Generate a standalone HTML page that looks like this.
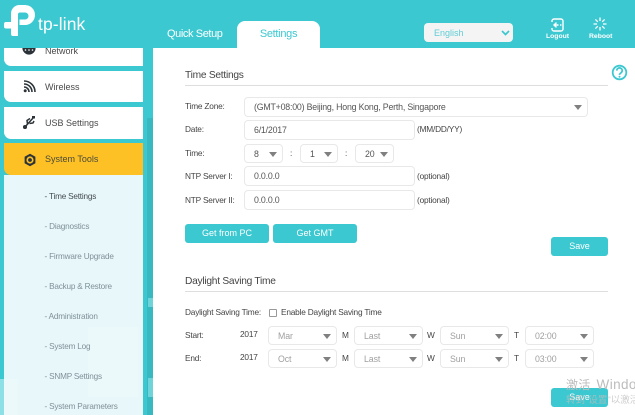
<!DOCTYPE html>
<html lang="en">
<head>
<meta charset="utf-8">
<title>Time Settings</title>
<style>
html,body{margin:0;padding:0;width:635px;height:415px;overflow:hidden;background:#fff}
body{position:relative;font-family:"Liberation Sans","Noto Sans CJK SC",sans-serif;color:#555}
#w{position:absolute;left:0;top:0;width:635px;height:415px;overflow:hidden;filter:blur(.3px)}
.a{position:absolute;white-space:nowrap}
.t{position:absolute;white-space:nowrap;line-height:14px}
.box{position:absolute;box-sizing:border-box;background:#fff;border:1px solid #e8e8e8;border-radius:4px;font-size:8.8px;letter-spacing:-.2px;line-height:18px;padding-left:9px;color:#555;white-space:nowrap}
.gr{color:#a0a0a0;font-size:8.8px;letter-spacing:-.1px}
.box i{position:absolute;right:5px;top:50%;margin-top:-2px;width:0;height:0;border-left:4px solid transparent;border-right:4px solid transparent;border-top:5px solid #808080}
.lab{font-size:8.3px;letter-spacing:-.2px;color:#444}
.btn{position:absolute;box-sizing:border-box;background:#3cc8d0;border-radius:3px;color:#fff;font-size:9px;text-align:center;line-height:19px;height:19px}
.mi{position:absolute;left:4px;width:139px;background:#fff;border-bottom-left-radius:7px}
.mt{position:absolute;left:45px;font-size:9px;color:#4a4a4a;line-height:12px;white-space:nowrap}
.sub{position:absolute;left:44.500px;font-size:8.200px;letter-spacing:-.2px;color:#7f9099;line-height:12px;white-space:nowrap}
.h{position:absolute;left:185px;font-size:10.200px;letter-spacing:-.25px;color:#444;line-height:14px;white-space:nowrap}
.hr{position:absolute;left:185px;width:423px;height:1px;background:#dedede}
</style>
</head>
<body>
<div id="w">
<!-- left teal -->
<div class="a" style="left:0;top:0;width:153px;height:415px;background:#3cc8d0"></div>
<div class="a" style="left:147px;top:118px;width:6px;height:297px;background:#38b8c1"></div>
<div class="a" style="left:148px;top:298px;width:5px;height:9px;background:#6fd3da"></div>
<div class="a" style="left:148px;top:378px;width:5px;height:19px;background:#6fd3da"></div>
<div class="a" style="left:0;top:379px;width:4px;height:36px;background:#8de0e5"></div>
<!-- menu -->
<div class="mi" style="top:40px;height:26px"></div>
<div class="mi" style="top:71px;height:31px"></div>
<div class="mi" style="top:107px;height:32px"></div>
<div class="mi" style="top:143px;height:32px;background:#fdc125"></div>
<div class="a" style="left:4px;top:175px;width:139px;height:240px;background:#e8f7f9"></div>
<div class="a" style="left:88px;top:327px;width:50px;height:70px;background:#ecf9fb"></div>
<div class="a" style="left:4px;top:379px;width:14px;height:36px;background:#ecf9fb"></div>

<svg class="a" style="left:22px;top:41px" width="14" height="14" viewBox="0 0 14 14"><circle cx="7" cy="7" r="6.600" fill="#2c3338"/><circle cx="3.500" cy="9" r=".8" fill="#fff"/><circle cx="7" cy="9" r=".8" fill="#fff"/><circle cx="10.500" cy="9" r=".8" fill="#fff"/></svg>
<div class="mt" style="top:45px">Network</div>

<svg class="a" style="left:23px;top:80px" width="13" height="13" viewBox="0 0 13 13" fill="none" stroke="#2c3338" stroke-width="1.600"><circle cx="2.200" cy="10.800" r="1.500" fill="#2c3338" stroke="none"/><path d="M1 7a5 5 0 0 1 5 5"/><path d="M1 4a8 8 0 0 1 8 8"/><path d="M1 1a11 11 0 0 1 11 11"/></svg>
<div class="mt" style="top:81px">Wireless</div>

<svg class="a" style="left:23px;top:115px" width="13" height="14" viewBox="0 0 13 14" fill="none" stroke="#2c3338" stroke-width="1.500"><path d="M1.500 12.500L10.500 2.500"/><path d="M4.500 9L4 5.500L7 3.500"/><path d="M6.500 8.500L10 8L11 6"/><circle cx="2" cy="12" r="1.300" fill="#2c3338"/><rect x="9" y="1" width="3" height="2.500" fill="#2c3338" stroke="none"/></svg>
<div class="mt" style="top:117px">USB Settings</div>

<svg class="a" style="left:22.500px;top:152.500px" width="14" height="14" viewBox="0 0 14 14"><path d="M7 .8L12.400 3.700v6.600L7 13.200 1.600 10.300V3.700z" fill="#2c3338"/><circle cx="7" cy="7" r="3.600" fill="#fdc125"/><circle cx="7" cy="7" r="1.900" fill="#2c3338"/></svg>
<div class="mt" style="top:153px;color:#4a4a3a">System Tools</div>

<div class="sub" style="top:191px;color:#444c52">- Time Settings</div>
<div class="sub" style="top:221px">- Diagnostics</div>
<div class="sub" style="top:251px">- Firmware Upgrade</div>
<div class="sub" style="top:281px">- Backup &amp; Restore</div>
<div class="sub" style="top:311px">- Administration</div>
<div class="sub" style="top:341px">- System Log</div>
<div class="sub" style="top:371px">- SNMP Settings</div>
<div class="sub" style="top:401px">- System Parameters</div>

<!-- header -->
<div class="a" style="left:0;top:0;width:635px;height:48px;background:#3cc8d0"></div>
<svg class="a" style="left:3px;top:4px" width="34" height="33" viewBox="0 0 34 33"><path fill-rule="evenodd" fill="#fff" d="M8 18V9.500A8.500 8.500 0 0 1 16.500 1H22a10 10 0 0 1 0 20h-5.500v-5.500H22a3.500 3.500 0 0 0 0-7h-5a2 2 0 0 0-2 2V32H10a2 2 0 0 1-2-2V24.500H3a2 2 0 0 1-2-2V20a2 2 0 0 1 2-2z"/></svg>
<div class="t" style="left:38px;top:14px;font-size:17.500px;line-height:20px;color:#fff;letter-spacing:.1px">tp-link</div>
<div class="t" style="left:167px;top:27px;font-size:11px;letter-spacing:-.4px;color:#fff">Quick Setup</div>
<div class="a" style="left:237px;top:21px;width:83px;height:28px;background:#fff;border-radius:8px 8px 0 0"></div>
<div class="t" style="left:237px;width:83px;text-align:center;top:27px;font-size:11px;letter-spacing:-.3px;color:#3cc8d0">Settings</div>

<div class="a" style="left:424px;top:23px;width:89px;height:19px;background:#f4f4f4;border-radius:4px"></div>
<div class="t" style="left:434px;top:26px;font-size:9px;color:#5fcdd5">English</div>
<svg class="a" style="left:501px;top:30px" width="9" height="6" viewBox="0 0 9 6"><path d="M1 1l3.500 3.500L8 1" fill="none" stroke="#3cc8d0" stroke-width="1.700"/></svg>

<svg class="a" style="left:550px;top:17.500px" width="14" height="14" viewBox="0 0 14 14" fill="none" stroke="#fff" stroke-width="1.400"><path d="M2 4V3a2 2 0 0 1 2-2h7a2 2 0 0 1 2 2v8a2 2 0 0 1-2 2H4a2 2 0 0 1-2-2v-1"/><path d="M8.500 7H4M6.500 4.600L4 7l2.500 2.400"/><path d="M10 7h1.500"/></svg>
<div class="t" style="left:546px;top:30px;font-size:6.800px;font-weight:bold;color:#fff">Logout</div>
<svg class="a" style="left:593px;top:17px" width="14" height="14" viewBox="0 0 14 14" stroke="#fff" stroke-width="1.300" fill="none"><path d="M7 .5v3.500M7 10v3.500M.5 7H4M10 7h3.500M2.400 2.400l2.400 2.400M9.200 9.200l2.400 2.400M2.400 11.600l2.400-2.400M9.200 4.800l2.400-2.400"/></svg>
<div class="t" style="left:589px;top:30px;font-size:6.800px;font-weight:bold;color:#fff">Reboot</div>

<!-- help -->
<svg class="a" style="left:611px;top:64px" width="17" height="17" viewBox="0 0 17 17"><circle cx="8.500" cy="8.500" r="6.800" fill="none" stroke="#3cc8d0" stroke-width="1.800"/><path d="M5.800 6.600a2.700 2.700 0 1 1 4.100 2.300c-.9.600-1.400 1-1.400 2" fill="none" stroke="#3cc8d0" stroke-width="1.700"/><circle cx="8.500" cy="12.800" r="1" fill="#3cc8d0"/></svg>

<!-- Time Settings -->
<div class="h" style="top:69px">Time Settings</div>
<div class="hr" style="top:85px"></div>

<div class="t lab" style="left:185px;top:99px">Time Zone:</div>
<div class="box" style="left:244px;top:97px;width:344px;height:20px">(GMT+08:00) Beijing, Hong Kong, Perth, Singapore<i></i></div>

<div class="t lab" style="left:185px;top:122px">Date:</div>
<div class="box" style="left:244px;top:120px;width:171px;height:20px">6/1/2017</div>
<div class="t lab" style="left:417px;top:122px">(MM/DD/YY)</div>

<div class="t lab" style="left:185px;top:146px">Time:</div>
<div class="box" style="left:244px;top:144px;width:39px;height:19px">8<i></i></div>
<div class="t lab" style="left:290px;top:146px">:</div>
<div class="box" style="left:300px;top:144px;width:38px;height:19px">1<i></i></div>
<div class="t lab" style="left:345px;top:146px">:</div>
<div class="box" style="left:355px;top:144px;width:39px;height:19px">20<i></i></div>

<div class="t lab" style="left:185px;top:169px">NTP Server I:</div>
<div class="box" style="left:244px;top:166px;width:171px;height:20px">0.0.0.0</div>
<div class="t lab" style="left:417px;top:169px">(optional)</div>

<div class="t lab" style="left:185px;top:192.500px">NTP Server II:</div>
<div class="box" style="left:244px;top:190px;width:171px;height:20px">0.0.0.0</div>
<div class="t lab" style="left:417px;top:192.500px">(optional)</div>

<div class="btn" style="left:185px;top:224px;width:84px">Get from PC</div>
<div class="btn" style="left:273px;top:224px;width:84px">Get GMT</div>
<div class="btn" style="left:551px;top:237px;width:57px">Save</div>

<!-- DST -->
<div class="h" style="top:275px">Daylight Saving Time</div>
<div class="hr" style="top:291px"></div>

<div class="t lab" style="left:185px;top:305px">Daylight Saving Time:</div>
<div class="a" style="left:269px;top:309px;width:8px;height:8px;box-sizing:border-box;border:1px solid #999;border-radius:1px;background:#fff"></div>
<div class="t lab" style="left:281px;top:305px">Enable Daylight Saving Time</div>

<div class="t lab" style="left:185px;top:328px">Start:</div>
<div class="t lab" style="left:240px;top:327px">2017</div>
<div class="box gr" style="left:268px;top:326px;width:69px;height:19px">Mar<i></i></div>
<div class="t lab" style="left:342px;top:328px">M</div>
<div class="box gr" style="left:354px;top:326px;width:69px;height:19px">Last<i></i></div>
<div class="t lab" style="left:427px;top:328px">W</div>
<div class="box gr" style="left:440px;top:326px;width:69px;height:19px">Sun<i></i></div>
<div class="t lab" style="left:514px;top:328px">T</div>
<div class="box gr" style="left:525px;top:326px;width:69px;height:19px">02:00<i></i></div>

<div class="t lab" style="left:185px;top:351px">End:</div>
<div class="t lab" style="left:240px;top:350px">2017</div>
<div class="box gr" style="left:268px;top:349px;width:69px;height:19px">Oct<i></i></div>
<div class="t lab" style="left:342px;top:351px">M</div>
<div class="box gr" style="left:354px;top:349px;width:69px;height:19px">Last<i></i></div>
<div class="t lab" style="left:427px;top:351px">W</div>
<div class="box gr" style="left:440px;top:349px;width:69px;height:19px">Sun<i></i></div>
<div class="t lab" style="left:514px;top:351px">T</div>
<div class="box gr" style="left:525px;top:349px;width:69px;height:19px">03:00<i></i></div>

<div class="btn" style="left:551px;top:388px;width:57px">Save</div>

<!-- watermark -->
<div class="t" style="left:566px;top:378px;font-size:12px;color:#bcbcbc;letter-spacing:.4px">激活 <span style="font-size:13.500px;margin-left:2px">Windows</span></div>
<div class="t" style="left:566px;top:394px;font-size:9.500px;color:#bdbdbd;opacity:.75">转到"设置"以激活</div>
</div>
</body>
</html>
